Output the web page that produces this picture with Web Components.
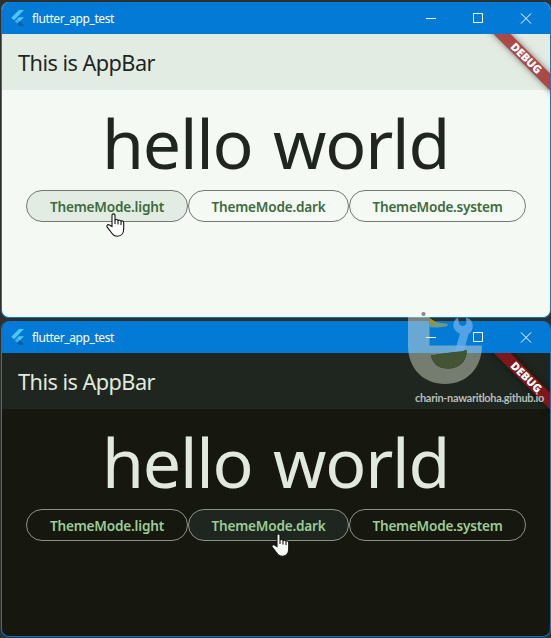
<!DOCTYPE html>
<html lang="en"><head><meta charset="utf-8"><title>flutter_app_test</title>
<style>html,body{margin:0;width:551px;height:638px;overflow:hidden;background:#2d302e}</style></head>
<body><demo-desktop></demo-desktop>
<script>
class FitText extends HTMLElement{
  connectedCallback(){
    const r=this.attachShadow({mode:'open'});
    r.innerHTML='<style>:host{display:inline-block;white-space:pre;line-height:1}span{display:inline-block}</style><span></span>';
    const s=r.querySelector('span');s.textContent=this.getAttribute('text');
    const target=+this.getAttribute('w'),w=s.getBoundingClientRect().width,n=s.textContent.length;
    s.style.letterSpacing=((target-w)/n)+'px';
    this.style.width=target+'px';
  }
}
customElements.define('fit-text',FitText);

class FlutterLogo extends HTMLElement{
  connectedCallback(){this.attachShadow({mode:'open'}).innerHTML=`<style>:host{display:block;width:14px;height:16px}svg{display:block}</style>
  <svg width="14" height="16" viewBox="0 0 14 16"><path d="M8 0h5L3 10.2.3 7.8z" fill="#54c5f8"/><path d="M8 7.2h5L8.6 11.4 6 9z" fill="#54c5f8"/><path d="M3.7 11.3 6.3 8.8l2.6 2.5-2.6 2.5z" fill="#3aaeea"/><path d="m6.3 13.8 2.6-2.5L13 15.7H8z" fill="#075b9d"/></svg>`}
}
customElements.define('flutter-logo',FlutterLogo);

class TitleBar extends HTMLElement{
  connectedCallback(){this.attachShadow({mode:'open'}).innerHTML=`<style>
  :host{display:flex;align-items:center;height:32px;background:#047ad7;color:#fff;box-sizing:border-box;padding-left:9px;font:12px "Noto Sans","Open Sans",sans-serif}
  flutter-logo{margin-right:7px}fit-text{flex:none;padding-top:2px}.c{display:flex;margin-left:auto}.c svg{display:block}</style>
  <flutter-logo></flutter-logo><fit-text w="82" text="flutter_app_test"></fit-text>
  <div class="c"><svg width="143" height="32" fill="none" stroke="#fff" stroke-width="1"><path d="M19 16.500h10M66.500 11.500h9v9h-9zM114 11.500l10 10M124 11.500l-10 10"/></svg></div>`}
}
customElements.define('title-bar',TitleBar);

class DebugBanner extends HTMLElement{
  connectedCallback(){this.attachShadow({mode:'open'}).innerHTML=`<style>
  :host{position:absolute;right:0;top:0;width:70px;height:70px;overflow:hidden;pointer-events:none}
  div{position:absolute;left:-3.5px;top:17.2px;width:96px;height:12px;background:var(--banner);transform:rotate(45deg);box-shadow:0 0 6px rgba(0,0,0,.5);display:flex;justify-content:center;align-items:center;color:#fff;font:900 11.3px "Noto Sans","Open Sans",sans-serif}</style>
  <div><fit-text w="35" text="DEBUG"></fit-text></div>`}
}
customElements.define('debug-banner',DebugBanner);

class HandCursor extends HTMLElement{
  connectedCallback(){this.attachShadow({mode:'open'}).innerHTML=`<style>:host{position:absolute;width:19px;height:25px}svg{display:block}</style>
  <svg width="19" height="25" viewBox="0 0 19 25"><path d="M6 13.5V2.200C6 .4 9 .4 9 2.200v5c.5-1 2.800-.9 3 .6.6-1 2.800-.8 3 .6.7-.9 2.700-.5 2.700 1.200v6c0 4.200-2.200 7.700-6.200 7.700-3 0-4.400-1-5.800-3.300l-4.500-5.900c-1-1.600 1.100-3.200 2.600-1.900zM9 7v4M12 8v3.500M15 9v3" fill="var(--hand)" stroke="var(--hand-line)" stroke-width="1.1"/></svg>`}
}
customElements.define('hand-cursor',HandCursor);

class ModeButton extends HTMLElement{
  connectedCallback(){this.attachShadow({mode:'open'}).innerHTML=`<style>
  :host{display:flex;align-items:center;justify-content:center;box-sizing:border-box;height:32px;border:1px solid var(--line);border-radius:16px;color:var(--accent);font:600 13.6px "Noto Sans","Open Sans",sans-serif;padding:2px 0 0 1px}
  :host([active]){background:var(--bar)}</style><fit-text w="${this.getAttribute('w')}" text="${this.getAttribute('label')}"></fit-text>`}
}
customElements.define('mode-button',ModeButton);

class AppWindow extends HTMLElement{
  connectedCallback(){
    const dark=this.hasAttribute('dark');
    this.attachShadow({mode:'open'}).innerHTML=`<style>
  :host{display:block;box-sizing:border-box;width:550px;height:316px;border:solid #047ad7;border-width:0 1px 1px;border-radius:8px;overflow:hidden;background:var(--page);color:var(--ink);font-family:"Noto Sans","Open Sans",sans-serif;--page:#f4f9f3;--bar:#e3ece3;--ink:#1e261f;--accent:#3d6b3d;--line:#737970;--banner:#ac4846;--hand:#fff;--hand-line:#111}
  :host([dark]){--page:#16170f;--bar:#1e261f;--ink:#e1e9df;--accent:#9ccc94;--line:#8b9389;--banner:#7f1719;--hand:#f7faf5;--hand-line:#16170f}
  main{position:relative;height:283px}
  header{height:56px;background:var(--bar);box-sizing:border-box;padding:2px 16px 0;display:flex;align-items:center;font-size:21.7px}
  h1{margin:0;font-weight:400;font-size:68px;height:100px;display:flex;align-items:center;justify-content:center;padding:6px 1px 0 0;box-sizing:border-box}
  h1 fit-text{word-spacing:4px}
  nav{display:grid;grid-template-columns:162px 161px 177px;justify-content:start;padding-left:23.5px}
  hand-cursor{left:${dark?'269px;top:180px':'104px;top:179px'}}
  </style><title-bar></title-bar><main><header><fit-text w="137" text="This is AppBar"></fit-text></header>
  <h1><fit-text w="347" text="hello world"></fit-text></h1>
  <nav><mode-button w="114" label="ThemeMode.light" ${dark?'':'active'}></mode-button><mode-button w="114" label="ThemeMode.dark" ${dark?'active':''}></mode-button><mode-button w="130" label="ThemeMode.system"></mode-button></nav>
  <debug-banner></debug-banner><hand-cursor></hand-cursor></main>`}
}
customElements.define('app-window',AppWindow);

class SiteMark extends HTMLElement{
  connectedCallback(){this.attachShadow({mode:'open'}).innerHTML=`<style>
  :host{position:absolute;left:406px;top:310px;width:140px;height:98px;color:#b9bcb9;font:700 11px Lato,"Open Sans",sans-serif}
  svg{display:block;height:82px}fit-text{margin-left:9px;display:block}</style>
  <svg width="84" height="82" viewBox="406 310 84 82"><circle cx="423.500" cy="314" r="2.100" fill="#858a86"/>
  <path d="M408 317h21.500v28.500H482c0 23-16 38.500-37 38.500s-37-15-37-38.500zM431 355.500c2 9 8 13 17 13 11 0 18.500-6.500 19-18.500z" fill="#d8ddcd" fill-opacity=".47" fill-rule="evenodd"/>
  <path d="M431 355.500c2 9 8 13 17 13 11 0 18.500-6.500 19-18.500z" fill="#425434"/>
  <path d="M429.500 318c4 4 8 4.800 17 5.500 2 .8 2 2.500-1 3-5 1.200-11 1.400-16 .4z" fill="#6d9a82"/><path d="M429.500 318l7 4.500-7 1z" fill="#a7902c"/>
  <path d="M458 317.500C452.500 320 451.500 328 457 332l3 2-5.500 18 9.500-1 4.500-17c5-2.500 6-11 1-15l-3.500-1.500.5 6c-2 3.500-6 3-7.500 0z" fill="#72b2ec" fill-opacity=".72"/></svg>
  <fit-text w="129" text="charin-nawaritloha.github.io"></fit-text>`}
}
customElements.define('site-mark',SiteMark);

class DemoDesktop extends HTMLElement{
  connectedCallback(){this.attachShadow({mode:'open'}).innerHTML=`<style>:host{position:relative;display:flex;flex-direction:column;gap:3px;width:551px;height:638px;box-sizing:border-box;padding:2px 0 1px 1px;overflow:hidden}</style><app-window></app-window><app-window dark></app-window><site-mark></site-mark>`}
}
customElements.define('demo-desktop',DemoDesktop);
</script></body></html>
